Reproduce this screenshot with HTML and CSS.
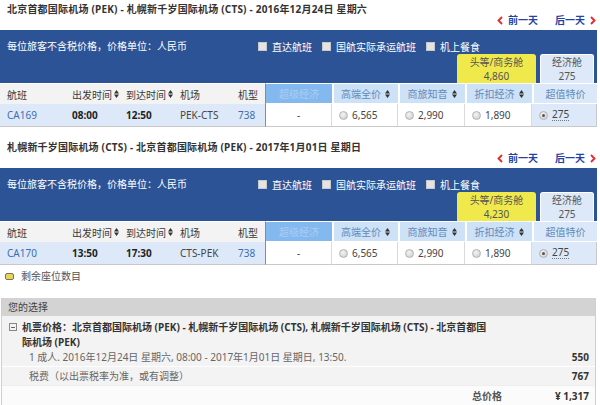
FILE: index.html
```html
<!DOCTYPE html>
<html lang="zh-CN">
<head>
<meta charset="utf-8">
<title>航班选择</title>
<link rel="stylesheet" href="styles.css">
</head>
<body>
<div class="page">

  <section class="leg">
    <div class="leg-head">
      <h2 class="leg-title">北京首都国际机场 (PEK) - 札幌新千岁国际机场 (CTS) - 2016年12月24日 星期六</h2>
      <div class="day-nav">
        <a class="day-link"><svg class="chev" viewBox="0 0 6 9" width="6" height="9"><path d="M5 1 L1.5 4.5 L5 8" fill="none" stroke="#e8262d" stroke-width="1.8"/></svg>前一天</a>
        <a class="day-link">后一天<svg class="chev" viewBox="0 0 6 9" width="6" height="9"><path d="M1 1 L4.5 4.5 L1 8" fill="none" stroke="#e8262d" stroke-width="1.8"/></svg></a>
      </div>
    </div>
    <div class="band">
      <div class="band-top">
        <span class="note">每位旅客不含税价格，价格单位：人民币</span>
        <div class="filters">
          <label class="filter"><span class="cb"></span>直达航班</label>
          <label class="filter"><span class="cb"></span>国航实际承运航班</label>
          <label class="filter"><span class="cb"></span>机上餐食</label>
        </div>
      </div>
      <div class="tabs">
        <div class="tab tab-biz"><span class="tab-line">头等/商务舱</span><span class="tab-line">4,860</span></div>
        <div class="tab tab-eco"><span class="tab-line">经济舱</span><span class="tab-line">275</span></div>
      </div>
    </div>
    <div class="fare-grid">
      <div class="hc hl c-first">航班</div>
      <div class="hc hl">出发时间<svg class="sort" viewBox="0 0 5 8" width="5" height="8"><path d="M0 3.4 L2.5 0 L5 3.4Z M0 4.6 L5 4.6 L2.5 8Z" fill="#333"/></svg></div>
      <div class="hc hl">到达时间<svg class="sort" viewBox="0 0 5 8" width="5" height="8"><path d="M0 3.4 L2.5 0 L5 3.4Z M0 4.6 L5 4.6 L2.5 8Z" fill="#333"/></svg></div>
      <div class="hc hl">机场</div>
      <div class="hc hl c-div">机型</div>
      <div class="hc hr h-dis">超级经济</div>
      <div class="hc hr">高端全价<svg class="sort sort-r" viewBox="0 0 5 8" width="5" height="8"><path d="M0 3.4 L2.5 0 L5 3.4Z M0 4.6 L5 4.6 L2.5 8Z" fill="#333"/></svg></div>
      <div class="hc hr">商旅知音<svg class="sort sort-r" viewBox="0 0 5 8" width="5" height="8"><path d="M0 3.4 L2.5 0 L5 3.4Z M0 4.6 L5 4.6 L2.5 8Z" fill="#333"/></svg></div>
      <div class="hc hr">折扣经济<svg class="sort sort-r" viewBox="0 0 5 8" width="5" height="8"><path d="M0 3.4 L2.5 0 L5 3.4Z M0 4.6 L5 4.6 L2.5 8Z" fill="#333"/></svg></div>
      <div class="hc hr h-sel">超值特价</div>

      <div class="dc dl c-first link">CA169</div>
      <div class="dc dl strong">08:00</div>
      <div class="dc dl strong">12:50</div>
      <div class="dc dl">PEK-CTS</div>
      <div class="dc dl c-div link">738</div>
      <div class="dc dr d-center">-</div>
      <div class="dc dr"><span class="radio"></span>6,565</div>
      <div class="dc dr"><span class="radio"></span>2,990</div>
      <div class="dc dr"><span class="radio"></span>1,890</div>
      <div class="dc dr d-sel"><span class="radio on"></span><span class="dotted">275</span></div>
    </div>
  </section>

  <section class="leg leg-2">
    <div class="leg-head">
      <h2 class="leg-title">札幌新千岁国际机场 (CTS) - 北京首都国际机场 (PEK) - 2017年1月01日 星期日</h2>
      <div class="day-nav">
        <a class="day-link"><svg class="chev" viewBox="0 0 6 9" width="6" height="9"><path d="M5 1 L1.5 4.5 L5 8" fill="none" stroke="#e8262d" stroke-width="1.8"/></svg>前一天</a>
        <a class="day-link">后一天<svg class="chev" viewBox="0 0 6 9" width="6" height="9"><path d="M1 1 L4.5 4.5 L1 8" fill="none" stroke="#e8262d" stroke-width="1.8"/></svg></a>
      </div>
    </div>
    <div class="band">
      <div class="band-top">
        <span class="note">每位旅客不含税价格，价格单位：人民币</span>
        <div class="filters">
          <label class="filter"><span class="cb"></span>直达航班</label>
          <label class="filter"><span class="cb"></span>国航实际承运航班</label>
          <label class="filter"><span class="cb"></span>机上餐食</label>
        </div>
      </div>
      <div class="tabs">
        <div class="tab tab-biz"><span class="tab-line">头等/商务舱</span><span class="tab-line">4,230</span></div>
        <div class="tab tab-eco"><span class="tab-line">经济舱</span><span class="tab-line">275</span></div>
      </div>
    </div>
    <div class="fare-grid">
      <div class="hc hl c-first">航班</div>
      <div class="hc hl">出发时间<svg class="sort" viewBox="0 0 5 8" width="5" height="8"><path d="M0 3.4 L2.5 0 L5 3.4Z M0 4.6 L5 4.6 L2.5 8Z" fill="#333"/></svg></div>
      <div class="hc hl">到达时间<svg class="sort" viewBox="0 0 5 8" width="5" height="8"><path d="M0 3.4 L2.5 0 L5 3.4Z M0 4.6 L5 4.6 L2.5 8Z" fill="#333"/></svg></div>
      <div class="hc hl">机场</div>
      <div class="hc hl c-div">机型</div>
      <div class="hc hr h-dis">超级经济</div>
      <div class="hc hr">高端全价<svg class="sort sort-r" viewBox="0 0 5 8" width="5" height="8"><path d="M0 3.4 L2.5 0 L5 3.4Z M0 4.6 L5 4.6 L2.5 8Z" fill="#333"/></svg></div>
      <div class="hc hr">商旅知音<svg class="sort sort-r" viewBox="0 0 5 8" width="5" height="8"><path d="M0 3.4 L2.5 0 L5 3.4Z M0 4.6 L5 4.6 L2.5 8Z" fill="#333"/></svg></div>
      <div class="hc hr">折扣经济<svg class="sort sort-r" viewBox="0 0 5 8" width="5" height="8"><path d="M0 3.4 L2.5 0 L5 3.4Z M0 4.6 L5 4.6 L2.5 8Z" fill="#333"/></svg></div>
      <div class="hc hr h-sel">超值特价</div>

      <div class="dc dl c-first link">CA170</div>
      <div class="dc dl strong">13:50</div>
      <div class="dc dl strong">17:30</div>
      <div class="dc dl">CTS-PEK</div>
      <div class="dc dl c-div link">738</div>
      <div class="dc dr d-center">-</div>
      <div class="dc dr"><span class="radio"></span>6,565</div>
      <div class="dc dr"><span class="radio"></span>2,990</div>
      <div class="dc dr"><span class="radio"></span>1,890</div>
      <div class="dc dr d-sel"><span class="radio on"></span><span class="dotted">275</span></div>
    </div>
  </section>

  <div class="seats"><span class="seat-icon"></span>剩余座位数目</div>

  <section class="summary">
    <div class="sum-head">您的选择</div>
    <div class="sum-main">
      <div class="sum-title"><span class="minus"></span><span class="sum-title-text">机票价格：北京首都国际机场 (PEK) - 札幌新千岁国际机场 (CTS), 札幌新千岁国际机场 (CTS) - 北京首都国际机场 (PEK)</span></div>
      <div class="sum-line"><span>1 成人. 2016年12月24日 星期六, 08:00 - 2017年1月01日 星期日, 13:50.</span><b>550</b></div>
    </div>
    <div class="sum-line sum-tax"><span>税费（以出票税率为准，或有调整）</span><b>767</b></div>
    <div class="sum-total"><span class="total-label">总价格</span><b>¥ 1,317</b></div>
  </section>

</div>
</body>
</html>
```

FILE: styles.css
```css
* { box-sizing: border-box; }

body {
  margin: 0;
  background: #fff;
  font-family: "Noto Sans", "Noto Sans CJK SC", sans-serif;
  font-size: 10px;
  color: #444;
}

.page {
  width: 597px;
}

.leg-2 { margin-top: 11px; }

.leg-head {
  height: 30px;
}

.leg-title {
  margin: 0;
  padding: 2px 0 0 7px;
  font-size: 10px;
  line-height: 14px;
  font-weight: bold;
  color: #333;
  letter-spacing: 0.2px;
}

.day-nav {
  display: flex;
  justify-content: flex-end;
  gap: 17px;
  margin-top: -2px;
  padding-right: 1px;
  line-height: 12px;
}

.day-link {
  display: flex;
  align-items: center;
  gap: 5px;
  color: #1f43a6;
  font-weight: bold;
}

.chev { display: block; }

.band {
  background: #2c5396;
  height: 53px;
  display: flex;
  flex-direction: column;
}

.band-top {
  height: 24px;
  padding: 9px 0 0 7px;
  display: flex;
  line-height: 14px;
}

.note {
  color: #fff;
  width: 251px;
}

.filters {
  display: flex;
  gap: 10px;
}

.filter {
  display: flex;
  align-items: center;
  gap: 5px;
  color: #fff;
}

.cb {
  display: block;
  width: 9px;
  height: 9px;
  background: #e4e4e4;
  border: 1px solid #c8c8c8;
  margin-top: -1px;
}

.tabs {
  display: flex;
  justify-content: flex-end;
  gap: 4px;
  padding-right: 3px;
  height: 29px;
}

.tab {
  height: 29px;
  display: flex;
  flex-direction: column;
  align-items: center;
  line-height: 14px;
  padding-top: 1px;
  border-radius: 3px 3px 0 0;
  color: #555;
}

.tab-line { display: block; }

.tab-biz {
  width: 79px;
  background: #efe94b;
}

.tab-eco {
  width: 54px;
  background: #dde9f8;
  border: 1px solid #fff;
  border-bottom: 0;
  padding-top: 0;
}

.fare-grid {
  display: grid;
  grid-template-columns: 65px 54px 54px 58px 35px 66px 66px 67px 67px 65px;
  grid-template-rows: 21px 23px;
}

.hc, .dc {
  display: flex;
  align-items: center;
  white-space: nowrap;
}

.hl {
  background: #f3f3f3;
  color: #3a3a3a;
  padding-left: 7px;
  border-top: 1px solid #fff;
}

.c-first { padding-left: 7px; }

.c-div { border-right: 1px solid #8a8a8a; }

.sort {
  display: block;
  margin-left: 2px;
}

.hr {
  background: #cde1f7;
  color: #6489b8;
  justify-content: center;
  position: relative;
  border-left: 2px solid #fff;
  border-top: 1px solid #fff;
  border-bottom: 1px solid #fff;
  padding-right: 10px;
}

.h-dis {
  background: #84b9ef;
  color: #aacdf3;
  border-left: 0;
  padding-right: 0;
}

.h-sel {
  background: #dae8f9;
  padding-right: 0;
}

.sort-r {
  position: absolute;
  right: 8px;
  top: 6px;
}

.dl {
  background: #dde9f8;
  padding-left: 7px;
  border-bottom: 1px solid #c9c9c9;
}

.dl.c-first { padding-left: 7px; }

.link { color: #3d6db3; }

.strong {
  font-weight: bold;
  color: #222;
}

.dr {
  background: #fff;
  padding-left: 7px;
  border-right: 1px solid #dadada;
  border-bottom: 1px solid #c9c9c9;
  color: #444;
}

.d-center {
  justify-content: center;
  padding-left: 0;
}

.d-sel {
  background: #dde9f8;
  border-right: 1px solid #c9c9c9;
}

.radio {
  display: block;
  width: 9px;
  height: 9px;
  border-radius: 50%;
  border: 1px solid #b4b4b4;
  background: radial-gradient(circle at 40% 35%, #f4f4f4 0%, #d6d6d6 70%, #c8c8c8 100%);
  margin-right: 4px;
  position: relative;
}

.radio.on::after {
  content: "";
  position: absolute;
  left: 2px;
  top: 2px;
  width: 3px;
  height: 3px;
  border-radius: 50%;
  background: #555;
}

.dotted {
  border-bottom: 1px dotted #777;
  line-height: 11px;
}

.seats {
  display: flex;
  align-items: center;
  gap: 7px;
  margin-top: 4px;
  padding-left: 5px;
  line-height: 14px;
  color: #555;
}

.seat-icon {
  display: block;
  width: 9px;
  height: 7px;
  background: #e6d55a;
  border: 1px solid #7c7450;
  border-radius: 2px;
}

.summary {
  margin: 15px 0 0 1px;
  width: 595px;
  border: 1px solid #cfcfcf;
  border-top: 0;
}

.sum-head {
  height: 18px;
  line-height: 18px;
  background: #d3d3d3;
  padding-left: 6px;
  color: #444;
}

.sum-main {
  background: #f3f3f3;
  padding: 4px 0 2px 0;
  border-bottom: 1px solid #fff;
}

.sum-title {
  display: flex;
  align-items: flex-start;
  padding-left: 7px;
  line-height: 15px;
  font-weight: bold;
  color: #333;
}

.minus {
  display: block;
  flex: none;
  width: 8px;
  height: 8px;
  border: 1px solid #888;
  margin: 3px 5px 0 0;
  position: relative;
}

.minus::after {
  content: "";
  position: absolute;
  left: 1px;
  right: 1px;
  top: 2.5px;
  height: 1px;
  background: #666;
}

.sum-title-text {
  width: 470px;
}

.sum-line {
  display: flex;
  justify-content: space-between;
  padding: 0 6px 0 27px;
  line-height: 14px;
  color: #666;
}

.sum-line b {
  color: #333;
}

.sum-tax {
  background: #f3f3f3;
  line-height: 18px;
}

.sum-total {
  display: flex;
  justify-content: flex-end;
  align-items: center;
  height: 20px;
  padding-right: 6px;
  background: #fbfbfb;
  border-top: 1px solid #eee;
  color: #555;
}

.total-label {
  font-weight: bold;
  margin-right: 53px;
}

.sum-total b {
  color: #333;
}
```
